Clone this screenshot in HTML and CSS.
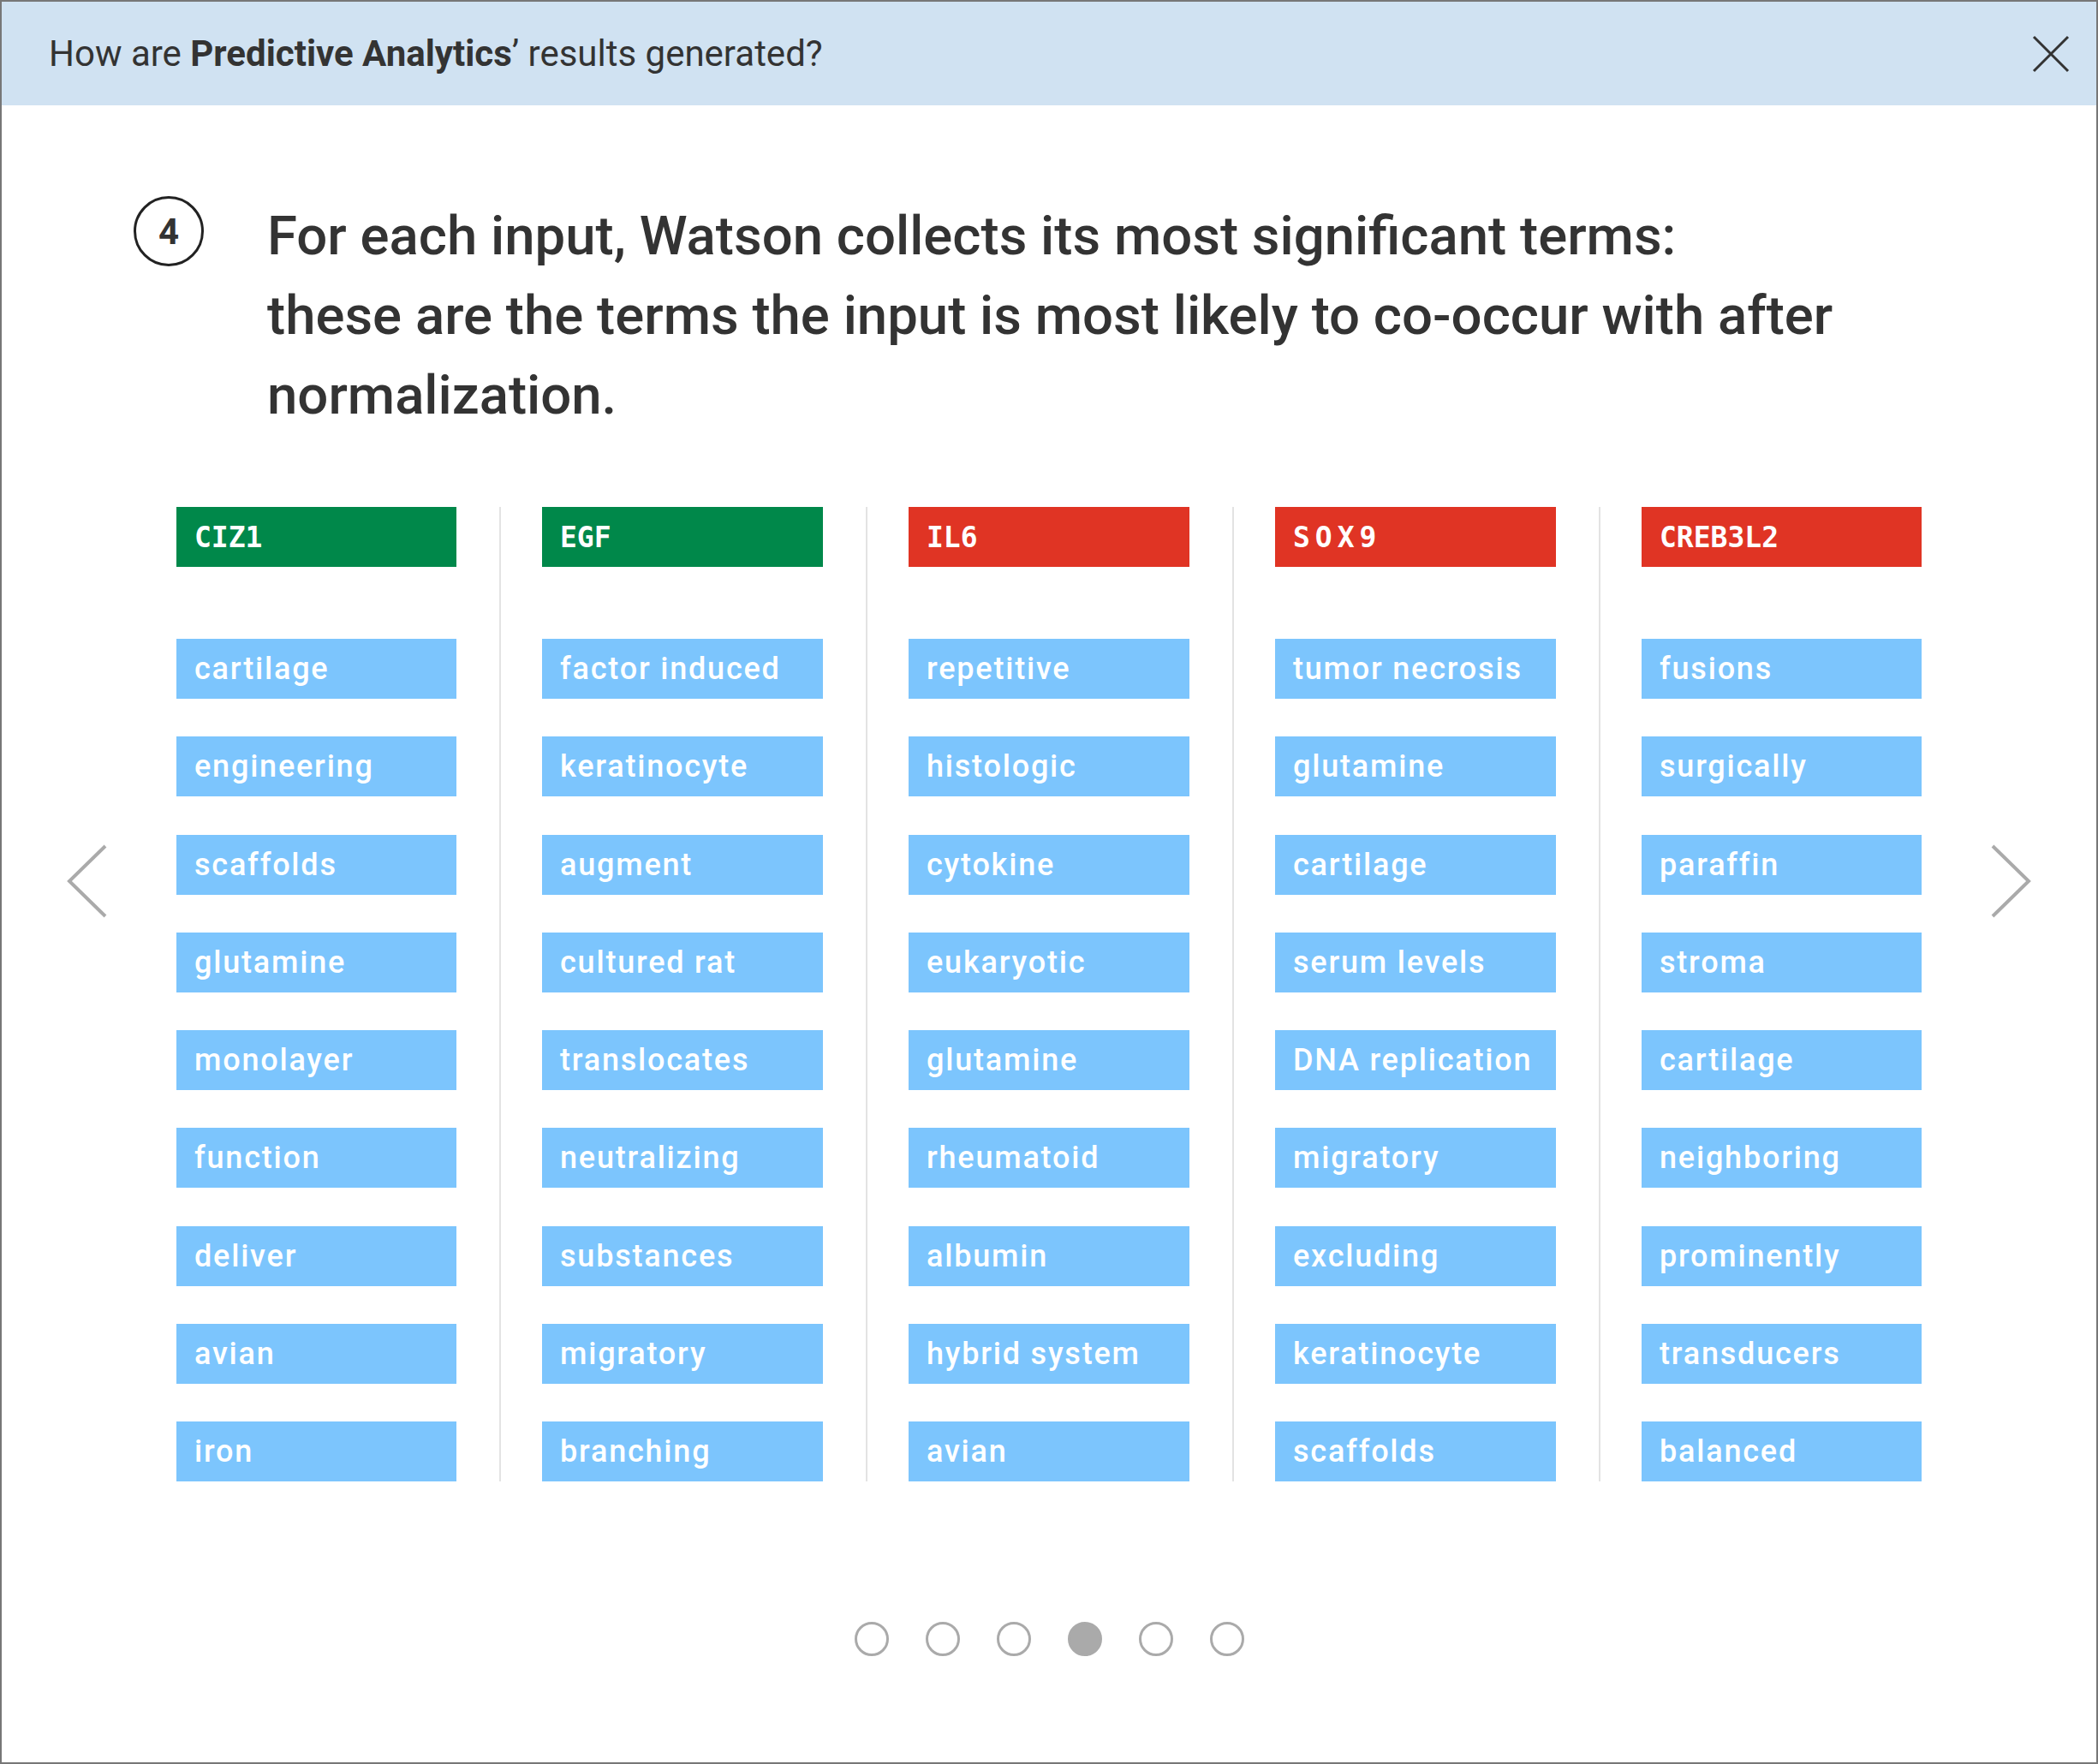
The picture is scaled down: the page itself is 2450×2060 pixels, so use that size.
FILE: index.html
```html
<!DOCTYPE html>
<html lang="en">
<head>
<meta charset="utf-8">
<title>How are Predictive Analytics’ results generated?</title>
<link rel="stylesheet" href="styles.css">
</head>
<body>
<div class="frame">
  <header class="topbar">
    <h1 class="title">How are <strong>Predictive Analytics</strong>’ results generated?</h1>
    <button class="close" aria-label="Close">
      <svg width="44" height="44" viewBox="0 0 44 44"><path d="M2 2 L42 42 M42 2 L2 42" stroke="#333" stroke-width="3" fill="none"/></svg>
    </button>
  </header>
  <div class="body">
    <button class="nav" aria-label="Previous">
      <svg width="48" height="90" viewBox="0 0 48 90"><path d="M46 3 L4 44 L46 85" stroke="#aaa" stroke-width="4" fill="none"/></svg>
    </button>
    <main class="main">
      <div class="step">
        <div class="step-num">4</div>
        <p class="step-text">For each input, Watson collects its most significant terms:<br>these are the terms the input is most likely to co-occur with after normalization.</p>
      </div>
      <div class="grid">
        <div class="col">
          <div class="head green">CIZ1</div>
          <ul class="terms">
            <li>cartilage</li><li>engineering</li><li>scaffolds</li><li>glutamine</li><li>monolayer</li><li>function</li><li>deliver</li><li>avian</li><li>iron</li>
          </ul>
        </div>
        <div class="col">
          <div class="head green">EGF</div>
          <ul class="terms">
            <li>factor induced</li><li>keratinocyte</li><li>augment</li><li>cultured rat</li><li>translocates</li><li>neutralizing</li><li>substances</li><li>migratory</li><li>branching</li>
          </ul>
        </div>
        <div class="col">
          <div class="head red">IL6</div>
          <ul class="terms">
            <li>repetitive</li><li>histologic</li><li>cytokine</li><li>eukaryotic</li><li>glutamine</li><li>rheumatoid</li><li>albumin</li><li>hybrid system</li><li>avian</li>
          </ul>
        </div>
        <div class="col">
          <div class="head red wide">SOX9</div>
          <ul class="terms">
            <li>tumor necrosis</li><li>glutamine</li><li>cartilage</li><li>serum levels</li><li>DNA replication</li><li>migratory</li><li>excluding</li><li>keratinocyte</li><li>scaffolds</li>
          </ul>
        </div>
        <div class="col">
          <div class="head red">CREB3L2</div>
          <ul class="terms">
            <li>fusions</li><li>surgically</li><li>paraffin</li><li>stroma</li><li>cartilage</li><li>neighboring</li><li>prominently</li><li>transducers</li><li>balanced</li>
          </ul>
        </div>
      </div>
      <div class="dots">
        <span class="dot"></span><span class="dot"></span><span class="dot"></span><span class="dot active"></span><span class="dot"></span><span class="dot"></span>
      </div>
    </main>
    <button class="nav" aria-label="Next">
      <svg width="48" height="90" viewBox="0 0 48 90"><path d="M2 3 L44 44 L2 85" stroke="#aaa" stroke-width="4" fill="none"/></svg>
    </button>
  </div>
</div>
</body>
</html>
```
FILE: styles.css
```css
* { box-sizing: border-box; }
html, body { margin: 0; padding: 0; background: #fff; }
body { font-family: Roboto, "Liberation Sans", sans-serif; color: #333; }

.frame {
  width: 2450px;
  height: 2060px;
  border: 2px solid #777;
  display: flex;
  flex-direction: column;
  background: #fff;
}

.topbar {
  height: 121px;
  background: #d0e2f2;
  display: flex;
  align-items: center;
  justify-content: space-between;
  padding: 0 31px 0 55px;
  flex: none;
}
.title {
  margin: 0;
  font-size: 42px;
  font-weight: 400;
  color: #333;
}
.title strong { font-weight: 700; }
.close {
  border: 0;
  background: transparent;
  padding: 0;
  width: 44px;
  height: 44px;
  display: flex;
}

.body {
  flex: 1;
  display: flex;
  padding: 0 75px;
}
.nav {
  flex: none;
  width: 48px;
  height: 90px;
  margin-top: 862px;
  border: 0;
  padding: 0;
  background: transparent;
  display: flex;
}
.main {
  flex: 1;
  min-width: 0;
  padding-top: 106px;
  display: flex;
  flex-direction: column;
}

.step {
  display: flex;
  align-items: flex-start;
  padding-left: 31px;
  gap: 74px;
}
.step-num {
  flex: none;
  width: 82px;
  height: 82px;
  border: 3px solid #222;
  border-radius: 50%;
  display: flex;
  align-items: center;
  justify-content: center;
  font-size: 42px;
  font-weight: 700;
  color: #333;
}
.step-text {
  margin: 0;
  font-size: 63.5px;
  line-height: 93px;
  font-weight: 500;
  color: #333;
}

.grid {
  margin-top: 84px;
  padding: 0 81px;
  display: grid;
  grid-template-columns: 377px 428px 428px 428px 377px;
}
.col {
  padding: 0 50px 0 48px;
  border-left: 2px solid #e3e3e3;
}
.col:first-child { border-left: 0; padding-left: 0; }
.col:last-child { padding-right: 0; }

.head, .terms li {
  height: 70px;
  display: flex;
  align-items: center;
  padding-left: 21px;
  color: #fff;
}
.head {
  font-family: "DejaVu Sans Mono", "Liberation Mono", monospace;
  font-size: 33px;
  font-weight: 700;
}
.head.wide { letter-spacing: 6px; }
.green { background: #00884a; }
.red { background: #e03424; }

.terms {
  list-style: none;
  margin: 84px 0 0;
  padding: 0;
  display: flex;
  flex-direction: column;
  gap: 44.3px;
}
.terms li {
  background: #7cc5fd;
  font-size: 36px;
  font-weight: 500;
  letter-spacing: 1.8px;
}

.dots {
  margin-top: 164px;
  display: flex;
  justify-content: center;
  gap: 43px;
}
.dot {
  width: 40px;
  height: 40px;
  border: 3px solid #aaa;
  border-radius: 50%;
}
.dot.active { background: #aaa; }
```
